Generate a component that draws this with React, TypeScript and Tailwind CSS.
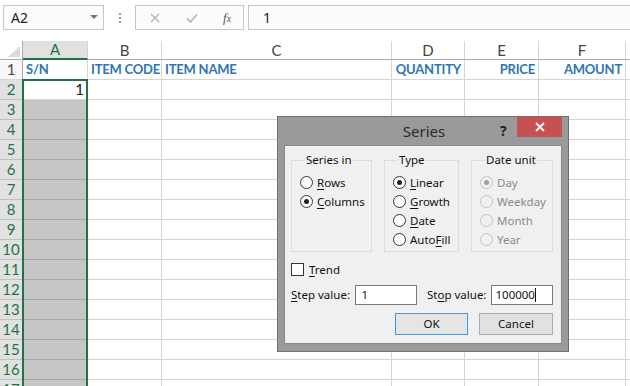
import React from "react";

const cols = [
  { l: "A", w: "w-[65px]" },
  { l: "B", w: "w-[74px]" },
  { l: "C", w: "w-[230px]" },
  { l: "D", w: "w-[73px]" },
  { l: "E", w: "w-[74px]" },
  { l: "F", w: "w-[87px]" },
  { l: "G", w: "w-[80px]" },
];

const row1 = [
  { t: "S/N", r: false },
  { t: "ITEM CODE", r: false },
  { t: "ITEM NAME", r: false },
  { t: "QUANTITY", r: true },
  { t: "PRICE", r: true },
  { t: "AMOUNT", r: true },
  { t: "", r: false },
];

const rows = Array.from({ length: 17 }, (_, i) => i + 1);

const Radio = ({ on, off }: { on?: boolean; off?: boolean }) => (
  <span
    className={
      off
        ? "w-[13px] h-[13px] rounded-full border border-[#c4c4c4] bg-[#f0f0f0] flex items-center justify-center shrink-0"
        : "w-[13px] h-[13px] rounded-full border border-[#333] bg-white flex items-center justify-center shrink-0"
    }
  >
    {on && <span className={off ? "w-[5px] h-[5px] rounded-full bg-[#a0a0a0]" : "w-[5px] h-[5px] rounded-full bg-[#222]"} />}
  </span>
);

const Opt = ({ u, rest, pre = "", on, off }: { u: string; rest: string; pre?: string; on?: boolean; off?: boolean }) => (
  <div className="flex items-center gap-[4px] h-[19px]">
    <Radio on={on} off={off} />
    <span className={off ? "text-[#8a8a8a]" : "text-[#111]"}>
      {pre}
      {off ? u : <span className="underline underline-offset-2">{u}</span>}
      {rest}
    </span>
  </div>
);

const Group = ({ title, w, children }: { title: string; w: string; children: React.ReactNode }) => (
  <fieldset className={`${w} h-[99px] border border-[#dcdcdc] pl-[8px] pt-[6px]`}>
    <legend className="ml-[5px] px-[1px] leading-[14px]">{title}</legend>
    {children}
  </fieldset>
);

export default function App() {
  return (
    <div className="w-[630px] h-[386px] overflow-hidden bg-white relative font-['Noto_Sans',sans-serif]">
      {/* formula bar */}
      <div className="h-[41px] flex items-start pt-[5px] pl-[3px] text-[14px] text-[#222]">
        <div className="w-[101px] h-[25px] border border-[#c6c6c6] bg-[#fcfcfc] flex items-center justify-between pl-[7px] pr-[5px]">
          <span>A2</span>
          <svg width="8" height="5" viewBox="0 0 8 5"><path d="M0 0h8L4 4z" fill="#777" /></svg>
        </div>
        <div className="w-[31px] h-[25px] flex flex-col items-center justify-center gap-[2px]">
          <span className="w-[2px] h-[2px] bg-[#999]" />
          <span className="w-[2px] h-[2px] bg-[#999]" />
          <span className="w-[2px] h-[2px] bg-[#999]" />
        </div>
        <div className="w-[109px] h-[25px] border border-[#c6c6c6] bg-[#fcfcfc] flex items-center pl-[13px]">
          <svg width="10" height="10" viewBox="0 0 10 10" className="ml-[1px]"><path d="M1 1l8 8M9 1l-8 8" stroke="#b4b4b4" strokeWidth="1.4" /></svg>
          <svg width="12" height="10" viewBox="0 0 12 10" className="ml-[26px]"><path d="M1 5.5l3.5 3.5L11 1.5" stroke="#b4b4b4" strokeWidth="1.6" fill="none" /></svg>
          <span className="ml-[25px] text-[13px] italic font-['Liberation_Serif',serif] text-[#555]">f<span className="text-[10px]">x</span></span>
        </div>
        <div className="ml-[4px] flex-1 h-[25px] border border-r-0 border-[#c6c6c6] bg-[#fcfcfc] flex items-center pl-[14px]">1</div>
      </div>

      {/* grid */}
      <div className="font-['Lato',sans-serif]">
        <div className="flex h-[19px]">
          <div className="w-[23px] shrink-0 border-r border-b border-[#ababab] bg-white relative">
            <svg width="12" height="11" viewBox="0 0 12 11" className="absolute right-[2px] bottom-[2px]"><path d="M12 0V11H0z" fill="#dadada" /></svg>
          </div>
          {cols.map((c) => (
            <div
              key={c.l}
              className={
                c.l === "A"
                  ? `${c.w} shrink-0 border-r border-[#d4d4d4] border-b-2 border-b-[#217346] bg-[#e1e1e1] flex items-center justify-center text-[15px] text-[#217346]`
                  : `${c.w} shrink-0 border-r border-[#d4d4d4] border-b border-b-[#ababab] bg-white flex items-center justify-center text-[15px] text-[#444]`
              }
            >
              {c.l}
            </div>
          ))}
        </div>
        {rows.map((r) => (
          <div key={r} className="flex h-[20px]">
            <div
              className={
                r === 1
                  ? "w-[23px] shrink-0 border-r border-b border-r-[#ababab] border-b-[#d4d4d4] bg-[#f8f8f8] flex items-center justify-center text-[15px] text-[#444]"
                  : "w-[23px] shrink-0 border-r border-b border-r-[#ababab] border-b-[#c0c0c0] bg-[#e1e1e1] flex items-center justify-center text-[15px] text-[#217346]"
              }
            >
              {r}
            </div>
            {cols.map((c, i) =>
              i === 0 && r > 2 ? (
                <div key={c.l} className={`${c.w} shrink-0 border-r border-b border-[#a8a8a8] bg-[#c6c6c6]`} />
              ) : (
                <div
                  key={c.l}
                  className={`${c.w} shrink-0 border-r border-b border-[#d4d4d4] flex items-center px-[3px] text-[15px] whitespace-nowrap ${
                    (r === 1 && row1[i].r) || (r === 2 && i === 0) ? "justify-end" : "justify-start"
                  }`}
                >
                  {r === 1 && <span className="font-bold text-[13px] tracking-[-0.2px] text-[#2e75b6]">{row1[i].t}</span>}
                  {r === 2 && i === 0 && <span className="text-[#111]">1</span>}
                </div>
              )
            )}
          </div>
        ))}
      </div>

      {/* selection border */}
      <div className="absolute left-[22px] top-[79px] w-[66px] h-[320px] border-2 border-[#217346]" />

      {/* Series dialog */}
      <div className="absolute left-[277px] top-[116px] w-[292px] h-[236px] bg-[#9a9a9a] border border-[#707070] flex flex-col text-[11.5px] text-[#111]">
        <div className="h-[28px] relative flex items-center justify-center">
          <span className="text-[15px] text-[#2b2b2b] ml-[2px]">Series</span>
          <span className="absolute left-[222px] top-[3px] text-[14px] font-bold text-[#222]">?</span>
          <div className="absolute right-[6px] top-0 w-[45px] h-[20px] bg-[#c75050] flex items-center justify-center">
            <svg width="10" height="10" viewBox="0 0 10 10"><path d="M1 1l8 8M9 1l-8 8" stroke="#fff" strokeWidth="1.8" /></svg>
          </div>
        </div>
        <div className="mx-[6px] mb-[7px] flex-1 bg-[#f0f0f0] border border-[#8a8a8a] pl-[6px] pr-[8px] pt-[7px]">
          <div className="flex gap-[12px]">
            <Group title="Series in" w="w-[81px]">
              <Opt u="R" rest="ows" />
              <Opt u="C" rest="olumns" on />
            </Group>
            <Group title="Type" w="w-[75px]">
              <Opt u="L" rest="inear" on />
              <Opt u="G" rest="rowth" />
              <Opt u="D" rest="ate" />
              <Opt pre="Auto" u="F" rest="ill" />
            </Group>
            <Group title="Date unit" w="w-[82px]">
              <Opt u="D" rest="ay" on off />
              <Opt u="W" rest="eekday" off />
              <Opt u="M" rest="onth" off />
              <Opt u="Y" rest="ear" off />
            </Group>
          </div>
          <div className="mt-[11px] flex items-center gap-[5px] h-[13px]">
            <span className="w-[13px] h-[13px] border border-[#333] bg-white" />
            <span><span className="underline underline-offset-2">T</span>rend</span>
          </div>
          <div className="mt-[9px] flex items-center h-[20px]">
            <span className="w-[65px]"><span className="underline underline-offset-2">S</span>tep value:</span>
            <div className="w-[62px] h-[20px] border border-[#7a7a7a] bg-white flex items-center pl-[5px]">1</div>
            <span className="ml-[10px] w-[65px]">St<span className="underline underline-offset-2">o</span>p value:</span>
            <div className="w-[62px] h-[20px] border border-[#7a7a7a] bg-white flex items-center pl-[3px]">
              100000<span className="w-[1px] h-[14px] bg-[#111]" />
            </div>
          </div>
          <div className="mt-[8px] flex justify-end gap-[11px]">
            <div className="w-[73px] h-[22px] border border-[#3c9be0] bg-[#e5e5e5] flex items-center justify-center">OK</div>
            <div className="w-[74px] h-[22px] border border-[#adadad] bg-[#e1e1e1] flex items-center justify-center">Cancel</div>
          </div>
        </div>
      </div>
    </div>
  );
}
